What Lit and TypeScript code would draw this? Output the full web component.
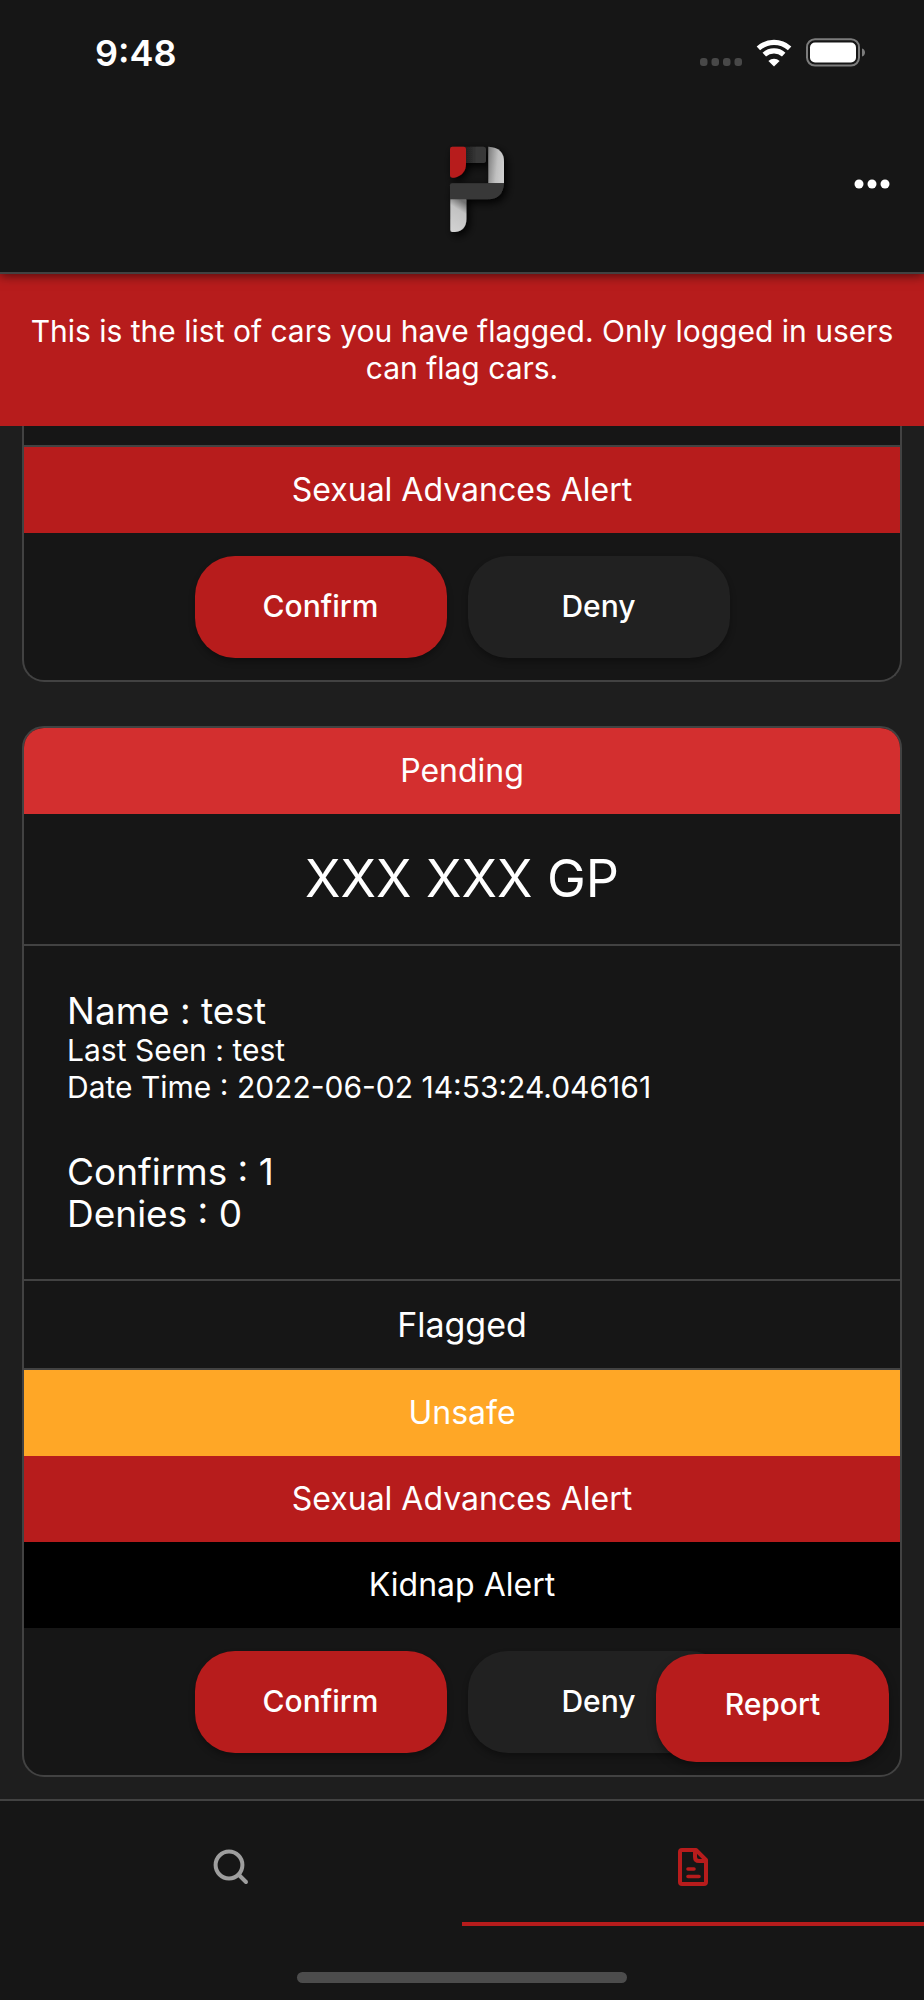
import { LitElement, html, css, svg, nothing } from "lit";
import { customElement, property } from "lit/decorators.js";

type Tone = "pending" | "unsafe" | "danger" | "kidnap";

interface Alert {
  label: string;
  tone: Tone;
}

interface Report {
  plate: string;
  name: string;
  lastSeen: string;
  dateTime: string;
  confirms: number;
  denies: number;
}

const logo = svg`
  <defs>
    <linearGradient id="side" x1="0" y1="0.2" x2="1" y2="0.45">
      <stop offset="0" stop-color="#808080" />
      <stop offset="0.6" stop-color="#c0c0c0" />
      <stop offset="1" stop-color="#cecece" />
    </linearGradient>
    <linearGradient id="stem" x1="0.5" y1="0" x2="0.2" y2="1">
      <stop offset="0" stop-color="#707070" />
      <stop offset="0.3" stop-color="#c2c2c2" />
      <stop offset="1" stop-color="#d2d2d2" />
    </linearGradient>
    <linearGradient id="top" x1="0" y1="0" x2="1" y2="0">
      <stop offset="0" stop-color="#1c1c1c" />
      <stop offset="0.6" stop-color="#383838" />
    </linearGradient>
    <filter id="shade" x="-30%" y="-30%" width="170%" height="160%">
      <feDropShadow dx="8" dy="10" stdDeviation="12" flood-color="#000" flood-opacity="1" />
    </filter>
  </defs>
  <g transform="translate(54 -12)">
    <g filter="url(#shade)">
      <path fill="url(#top)" d="M130 80H190q8 0 8 8V121q0 8-8 8H130z" />
      <path fill="url(#side)" d="M205 80q47 2 47 46V190H205z" />
      <path fill="url(#stem)" d="M91 236H139V296q0 36-34 40H97q-6 0-6-6z" />
      <path fill="#383838" d="M96 190H252q-3 48-47 48H90V196q0-6 6-6z" />
      <path fill="#b71c1c" d="M97 80H131q7 0 7 7V129q0 37-36 44H97q-7 0-7-7V87q0-7 7-7z" />
    </g>
  </g>
`;

@customElement("status-bar")
export class StatusBar extends LitElement {
  static styles = css`
    :host {
      display: flex;
      align-items: center;
      justify-content: space-between;
      height: 86px;
      padding: 10px 58px 0 95px;
    }
    .time {
      font-size: 36px;
      font-weight: 600;
      line-height: 44px;
    }
    .signals {
      display: block;
      width: 168px;
      height: 32px;
    }
  `;

  render() {
    return html`
      <span class="time">9:48</span>
      <svg class="signals" viewBox="0 0 168 32" aria-hidden="true">
        <g fill="#484848">
          <rect x="2" y="21" width="7.5" height="8" rx="3" />
          <rect x="13.5" y="21" width="7.5" height="8" rx="3" />
          <rect x="25" y="21" width="7.5" height="8" rx="3" />
          <rect x="36.5" y="21" width="7.5" height="8" rx="3" />
        </g>
        <g fill="none" stroke="#fff" stroke-width="5.2">
          <path d="M60.4 11.4a23.4 23.4 0 0 1 31.2 0" />
          <path d="M66.3 17.6a14.6 14.6 0 0 1 19.4 0" />
        </g>
        <path fill="#fff" d="M76 29.5l-5.6-5.6a8.4 8.4 0 0 1 11.2 0z" />
        <rect x="109" y="2.2" width="52" height="26.4" rx="8" fill="none" stroke="#7c7c7c" stroke-width="2" />
        <rect x="112" y="5.6" width="46" height="19.8" rx="5" fill="#fff" />
        <path d="M164 11.4c4 1 4 7 0 8z" fill="#7c7c7c" />
      </svg>
    `;
  }
}

@customElement("flag-card")
export class FlagCard extends LitElement {
  @property({ attribute: false }) status?: Alert;
  @property({ attribute: false }) report?: Report;
  @property({ attribute: false }) alerts: Alert[] = [];

  static styles = css`
    :host {
      display: flex;
      flex-direction: column;
      box-sizing: border-box;
      border: 2px solid #424242;
      border-radius: 22px;
      overflow: hidden;
      background: #161616;
    }
    .band {
      padding: 23px 16px;
      font-size: 32px;
      line-height: 40px;
      text-align: center;
    }
    .pending { background: #d32f2f; }
    .unsafe { background: #ffa726; }
    .danger { background: #b71c1c; }
    .kidnap { background: #000; }
    .plate {
      margin: 0;
      padding: 35px 16px;
      font-size: 52px;
      font-weight: 400;
      line-height: 60px;
      text-align: center;
    }
    .details {
      display: grid;
      gap: 45px;
      padding: 44px 43px;
      border-top: 2px solid #424242;
      border-bottom: 2px solid #424242;
    }
    .line {
      margin: 0;
      font-size: 30px;
      line-height: 37px;
    }
    .large {
      font-size: 37px;
      line-height: 42px;
    }
    .heading {
      font-size: 34px;
      line-height: 41px;
    }
    .alerts {
      border-top: 2px solid #424242;
    }
    .actions {
      display: flex;
      justify-content: center;
      gap: 21px;
      padding: 23px 22px 22px;
    }
    .action {
      min-width: 252px;
      padding: 31px 64px 33px;
      border: 0;
      border-radius: 40px;
      background: #b71c1c;
      color: #fff;
      font: 500 30px/38px Inter, sans-serif;
      box-shadow: 0 4px 6px rgba(0, 0, 0, 0.3);
    }
    .deny {
      min-width: 262px;
      background: #212121;
    }
  `;

  private renderReport(r: Report) {
    return html`
      <h2 class="plate">${r.plate}</h2>
      <div class="details">
        <div>
          <p class="line large">Name : ${r.name}</p>
          <p class="line">Last Seen : ${r.lastSeen}</p>
          <p class="line">Date Time : ${r.dateTime}</p>
        </div>
        <div>
          <p class="line large">Confirms : ${r.confirms}</p>
          <p class="line large">Denies : ${r.denies}</p>
        </div>
      </div>
      <div class="band heading">Flagged</div>
    `;
  }

  render() {
    return html`
      ${this.status ? html`<div class="band ${this.status.tone}">${this.status.label}</div>` : nothing}
      ${this.report ? this.renderReport(this.report) : nothing}
      <div class="alerts">
        ${this.alerts.map((a) => html`<div class="band ${a.tone}">${a.label}</div>`)}
      </div>
      <div class="actions">
        <button class="action" type="button">Confirm</button>
        <button class="action deny" type="button">Deny</button>
      </div>
    `;
  }
}

@customElement("app-root")
export class AppRoot extends LitElement {
  static styles = css`
    :host {
      display: flex;
      flex-direction: column;
      height: 100vh;
      overflow: hidden;
      background: #1e1e1e;
      color: #fff;
      font-family: Inter, sans-serif;
    }
    .top {
      position: relative;
      z-index: 1;
      background: #161616;
      border-bottom: 2px solid #424242;
      box-shadow: 0 2px 10px rgba(0, 0, 0, 0.55);
    }
    .bar {
      display: grid;
      grid-template-columns: 1fr 120px 1fr;
      align-items: center;
      height: 176px;
      padding: 0 22px;
    }
    .logo {
      grid-column: 2;
      width: 120px;
      height: 120px;
    }
    .more {
      justify-self: end;
      display: flex;
      padding: 12px;
      border: 0;
      background: none;
      color: #fff;
    }
    .dots {
      width: 36px;
      height: 24px;
    }
    .banner {
      margin: 0;
      padding: 39px 22px;
      background: #b71c1c;
      font-size: 30px;
      line-height: 37px;
      text-align: center;
    }
    .list {
      flex: 1;
      min-height: 0;
      display: flex;
      flex-direction: column;
      justify-content: flex-end;
      gap: 44px;
      padding: 0 22px 22px;
      overflow: hidden;
      position: relative;
    }
    .list flag-card {
      flex: none;
    }
    .list .continued {
      flex: 1;
      justify-content: flex-end;
      border-top: 0;
      border-top-left-radius: 0;
      border-top-right-radius: 0;
    }
    .report {
      position: absolute;
      right: 35px;
      bottom: 37px;
      min-width: 233px;
      padding: 31px 64px 39px;
      border: 0;
      border-radius: 40px;
      background: #b71c1c;
      color: #fff;
      font: 500 30px/38px Inter, sans-serif;
      box-shadow: 0 4px 8px rgba(0, 0, 0, 0.35);
    }
    .foot {
      background: #161616;
      border-top: 2px solid #424242;
    }
    .tabs {
      display: grid;
      grid-template-columns: 1fr 1fr;
    }
    .tab {
      display: flex;
      align-items: center;
      justify-content: center;
      height: 110px;
      padding-top: 11px;
      border-bottom: 4px solid transparent;
      color: #9e9e9e;
    }
    .active {
      border-color: #b71c1c;
      color: #b71c1c;
    }
    .icon {
      width: 44px;
      height: 44px;
      fill: none;
      stroke: currentColor;
      stroke-width: 4;
      stroke-linecap: round;
      stroke-linejoin: round;
    }
    .home {
      width: 330px;
      height: 11px;
      margin: 46px auto 17px;
      border-radius: 6px;
      background: #4c4c4c;
    }
  `;

  render() {
    return html`
      <header class="top">
        <status-bar></status-bar>
        <div class="bar">
          <svg class="logo" viewBox="0 0 360 360" role="img" aria-label="Logo">${logo}</svg>
          <button class="more" type="button" aria-label="More options">
            <svg class="dots" viewBox="0 0 36 24" fill="currentColor">
              <circle cx="5" cy="12" r="4.5" />
              <circle cx="18" cy="12" r="4.5" />
              <circle cx="31" cy="12" r="4.5" />
            </svg>
          </button>
        </div>
      </header>
      <p class="banner">
        This is the list of cars you have flagged. Only logged in users can flag cars.
      </p>
      <main class="list">
        <flag-card
          class="continued"
          .alerts=${[{ label: "Sexual Advances Alert", tone: "danger" }]}
        ></flag-card>
        <flag-card
          .status=${{ label: "Pending", tone: "pending" }}
          .report=${{
            plate: "XXX XXX GP",
            name: "test",
            lastSeen: "test",
            dateTime: "2022-06-02 14:53:24.046161",
            confirms: 1,
            denies: 0,
          }}
          .alerts=${[
            { label: "Unsafe", tone: "unsafe" },
            { label: "Sexual Advances Alert", tone: "danger" },
            { label: "Kidnap Alert", tone: "kidnap" },
          ]}
        ></flag-card>
        <button class="report" type="button">Report</button>
      </main>
      <footer class="foot">
        <nav class="tabs">
          <a class="tab" href="#search" aria-label="Search">
            <svg class="icon" viewBox="0 0 44 44">
              <circle cx="20" cy="20" r="13.4" />
              <path d="M30 30l7 7" />
            </svg>
          </a>
          <a class="tab active" href="#flagged" aria-label="Flagged cars" aria-current="page">
            <svg class="icon" viewBox="0 0 44 44">
              <path d="M12 5H25L35 15V37q0 2-2 2H11q-2 0-2-2V7q0-2 2-2z" />
              <path d="M24 5V12q0 4 4 4H35" />
              <path stroke-width="3.6" d="M17 24H23M17 31.5H28" />
            </svg>
          </a>
        </nav>
        <div class="home"></div>
      </footer>
    `;
  }
}
